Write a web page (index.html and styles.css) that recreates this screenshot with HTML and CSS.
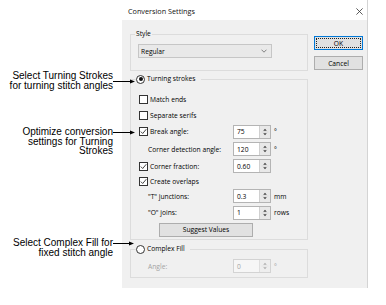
FILE: index.html
```html
<!DOCTYPE html>
<html lang="en">
<head>
<meta charset="utf-8">
<title>Conversion Settings</title>
<link rel="stylesheet" href="styles.css">
</head>
<body>
<div class="page">
  <div class="notes">
    <div class="note note-1">Select Turning Strokes<br>for turning stitch angles<svg class="arrow arrow-1" width="22" height="5" viewBox="0 0 22 5"><path d="M0 2.5H18" stroke="#000" stroke-width="1"/><path d="M17 0.5L22 2.5L17 4.5Z" fill="#000"/></svg></div>
    <div class="note note-2">Optimize conversion<br>settings for Turning<br>Strokes<svg class="arrow arrow-2" width="22" height="5" viewBox="0 0 22 5"><path d="M0 2.5H18" stroke="#000" stroke-width="1"/><path d="M17 0.5L22 2.5L17 4.5Z" fill="#000"/></svg></div>
    <div class="note note-3">Select Complex Fill for<br>fixed stitch angle<svg class="arrow arrow-3" width="21" height="5" viewBox="0 0 21 5"><path d="M0 2.5H17" stroke="#000" stroke-width="1"/><path d="M16 0.5L21 2.5L16 4.5Z" fill="#000"/></svg></div>
  </div>

  <div class="dialog">
    <div class="titlebar">
      <span class="title">Conversion Settings</span>
      <svg class="close" width="7" height="7" viewBox="0 0 7 7"><path d="M0.4 0.4L6.6 6.6M6.6 0.4L0.4 6.6" stroke="#333" stroke-width="0.8" fill="none"/></svg>
    </div>
    <div class="body">
      <div class="groups">
        <fieldset class="group group-style">
          <legend class="legend-text">Style</legend>
          <div class="combo">
            <span>Regular</span>
            <svg width="6" height="4" viewBox="0 0 6 4"><path d="M0.5 0.7L3 3.2L5.5 0.7" fill="none" stroke="#666" stroke-width="0.8"/></svg>
          </div>
        </fieldset>

        <fieldset class="group group-turning">
          <legend class="legend-radio"><span class="legend-inner"><span class="radio on"></span><span>Turning strokes</span></span></legend>
          <div class="opt-grid turning-grid">
            <div class="lbl span-all"><span class="check"></span>Match ends</div>
            <div class="lbl span-all"><span class="check"></span>Separate serifs</div>

            <div class="lbl"><span class="check"><svg width="7" height="7" viewBox="0 0 7 7"><path d="M0.8 3.6L2.7 5.5L6.3 1.2" fill="none" stroke="#333" stroke-width="0.9"/></svg></span>Break angle:</div>
            <div class="spin"><span class="spin-val">75</span><span class="spin-btns"><svg width="10" height="12" viewBox="0 0 10 12"><path d="M3.2 4.8L5 2.8L6.8 4.8Z M3.2 7.2L5 9.2L6.8 7.2Z" fill="#444"/><path d="M1.5 6H8.5" stroke="#c8c8c8" stroke-width="0.5"/></svg></span></div>
            <div class="unit">°</div>

            <div class="lbl indent">Corner detection angle:</div>
            <div class="spin"><span class="spin-val">120</span><span class="spin-btns"><svg width="10" height="12" viewBox="0 0 10 12"><path d="M3.2 4.8L5 2.8L6.8 4.8Z M3.2 7.2L5 9.2L6.8 7.2Z" fill="#444"/><path d="M1.5 6H8.5" stroke="#c8c8c8" stroke-width="0.5"/></svg></span></div>
            <div class="unit">°</div>

            <div class="lbl"><span class="check"><svg width="7" height="7" viewBox="0 0 7 7"><path d="M0.8 3.6L2.7 5.5L6.3 1.2" fill="none" stroke="#333" stroke-width="0.9"/></svg></span>Corner fraction:</div>
            <div class="spin"><span class="spin-val">0.60</span><span class="spin-btns"><svg width="10" height="12" viewBox="0 0 10 12"><path d="M3.2 4.8L5 2.8L6.8 4.8Z M3.2 7.2L5 9.2L6.8 7.2Z" fill="#444"/><path d="M1.5 6H8.5" stroke="#c8c8c8" stroke-width="0.5"/></svg></span></div>
            <div class="unit"></div>

            <div class="lbl span-all"><span class="check"><svg width="7" height="7" viewBox="0 0 7 7"><path d="M0.8 3.6L2.7 5.5L6.3 1.2" fill="none" stroke="#333" stroke-width="0.9"/></svg></span>Create overlaps</div>

            <div class="lbl indent">&quot;T&quot; junctions:</div>
            <div class="spin"><span class="spin-val">0.3</span><span class="spin-btns"><svg width="10" height="12" viewBox="0 0 10 12"><path d="M3.2 4.8L5 2.8L6.8 4.8Z M3.2 7.2L5 9.2L6.8 7.2Z" fill="#444"/><path d="M1.5 6H8.5" stroke="#c8c8c8" stroke-width="0.5"/></svg></span></div>
            <div class="unit">mm</div>

            <div class="lbl indent">&quot;O&quot; joins:</div>
            <div class="spin"><span class="spin-val">1</span><span class="spin-btns"><svg width="10" height="12" viewBox="0 0 10 12"><path d="M3.2 4.8L5 2.8L6.8 4.8Z M3.2 7.2L5 9.2L6.8 7.2Z" fill="#444"/><path d="M1.5 6H8.5" stroke="#c8c8c8" stroke-width="0.5"/></svg></span></div>
            <div class="unit">rows</div>

            <div class="span-all"><div class="btn btn-suggest">Suggest Values</div></div>
          </div>
        </fieldset>

        <fieldset class="group group-complex">
          <legend class="legend-radio"><span class="legend-inner"><span class="radio"></span><span>Complex Fill</span></span></legend>
          <div class="opt-grid complex-grid">
            <div class="lbl indent disabled">Angle:</div>
            <div class="spin spin-disabled"><span class="spin-val">0</span><span class="spin-btns"><svg width="10" height="12" viewBox="0 0 10 12"><path d="M3.2 4.8L5 2.8L6.8 4.8Z M3.2 7.2L5 9.2L6.8 7.2Z" fill="#b0b0b0"/><path d="M1.5 6H8.5" stroke="#d8d8d8" stroke-width="0.5"/></svg></span></div>
            <div class="unit disabled">°</div>
          </div>
        </fieldset>
      </div>

      <div class="buttons">
        <div class="btn btn-default">OK</div>
        <div class="btn">Cancel</div>
      </div>
    </div>
  </div>
</div>
</body>
</html>
```

FILE: styles.css
```css
html, body {
  margin: 0;
  padding: 0;
  background: #ffffff;
}

body {
  width: 386px;
  height: 305px;
  overflow: hidden;
}

.page {
  display: flex;
  align-items: flex-start;
}

/* ---------- annotations ---------- */
.notes {
  width: 122px;
  flex: none;
  display: flex;
  flex-direction: column;
  align-items: flex-start;
  font-family: "Liberation Sans", Arial, sans-serif;
  font-size: 10px;
  line-height: 9.5px;
  color: #000;
}

.note {
  position: relative;
  width: 113px;
  text-align: right;
  white-space: nowrap;
}

.note-1 { margin-top: 71px; }
.note-2 { margin-top: 37px; }
.note-3 { margin-top: 82.5px; }

.arrow {
  position: absolute;
  left: 100%;
}

.arrow-1 { top: 8px; }
.arrow-2 { top: 3px; }
.arrow-3 { top: 3px; }

/* ---------- dialog ---------- */
.dialog {
  width: 246px;
  height: 288px;
  flex: none;
  box-sizing: border-box;
  border-right: 1px solid #d4d4d4;
  display: flex;
  flex-direction: column;
  font-family: "Open Sans", "Noto Sans", sans-serif;
  font-size: 6.7px;
  color: #000;
}

.titlebar {
  height: 20px;
  flex: none;
  box-sizing: border-box;
  padding: 2px 4px 0 6px;
  display: flex;
  align-items: center;
  justify-content: space-between;
  background: #ffffff;
}

.title {
  font-size: 7.25px;
  color: #111;
}

.close {
  display: block;
}

.body {
  flex: 1;
  display: flex;
  gap: 6px;
  padding: 9px 4px 0 8px;
  background: #f0f0f0;
}

.groups {
  width: 178px;
  flex: none;
  display: flex;
  flex-direction: column;
}

.group {
  margin: 0;
  padding: 0;
  min-width: 0;
  border: 1px solid #dcdcdc;
}

.group-turning { margin-top: 3px; }
.group-complex { margin-top: 4px; }

legend {
  padding: 0;
  height: 10px;
  line-height: 10px;
}

.legend-text {
  margin-left: 4px;
  padding: 0 1px;
}

.legend-radio {
  margin-left: 5px;
  padding-right: 5px;
}

.legend-inner {
  display: flex;
  align-items: center;
  gap: 2px;
  height: 10px;
}

.combo {
  margin: 5px 0 12px 7px;
  width: 134px;
  height: 14px;
  box-sizing: border-box;
  border: 1px solid #c6c6c6;
  background: #e9e9e9;
  display: flex;
  align-items: center;
  justify-content: space-between;
  padding: 0 4px 0 2px;
}

.combo svg { display: block; }

/* ---------- option grid ---------- */
.opt-grid {
  display: grid;
  grid-template-columns: 94px 38px auto;
  align-items: center;
}

.turning-grid {
  grid-template-rows: 16px 16px 17px 18px 16px 14px 16px 17px 17px;
  padding: 7px 0 1px 8px;
}

.complex-grid {
  grid-template-rows: 14px;
  padding: 5px 0 4px 8px;
}

.span-all { grid-column: 1 / -1; }

.lbl {
  display: flex;
  align-items: center;
  gap: 2px;
  white-space: nowrap;
}

.indent { padding-left: 9px; }

.disabled { color: #a3a3a3; }

.check {
  width: 9px;
  height: 9px;
  flex: none;
  box-sizing: border-box;
  border: 1px solid #333;
  background: #fff;
  display: flex;
  align-items: center;
  justify-content: center;
}

.check svg { display: block; }

.radio {
  width: 9px;
  height: 9px;
  flex: none;
  box-sizing: border-box;
  border: 1px solid #333;
  border-radius: 50%;
  background: #fff;
  display: flex;
  align-items: center;
  justify-content: center;
}

.radio.on::after {
  content: "";
  width: 4px;
  height: 4px;
  border-radius: 50%;
  background: #111;
}

.spin {
  width: 38px;
  height: 14px;
  box-sizing: border-box;
  border: 1px solid #b4b4b4;
  background: #fff;
  display: flex;
}

.spin-val {
  flex: 1;
  padding-left: 3px;
  display: flex;
  align-items: center;
}

.spin-btns {
  width: 11px;
  flex: none;
  box-sizing: border-box;
  border-left: 1px solid #d0d0d0;
  background: #e8e8e8;
  display: flex;
  align-items: center;
  justify-content: center;
}

.spin-btns svg { display: block; }

.spin-disabled {
  border-color: #d3d3d3;
  background: #f6f6f6;
  color: #a3a3a3;
}

.spin-disabled .spin-btns {
  background: #eeeeee;
  border-left-color: #dedede;
}

.unit {
  padding-left: 3px;
  white-space: nowrap;
}

/* ---------- buttons ---------- */
.buttons {
  width: 49px;
  flex: none;
  display: flex;
  flex-direction: column;
  gap: 6px;
  padding-top: 7px;
}

.btn {
  height: 14px;
  box-sizing: border-box;
  border: 1px solid #adadad;
  background: #e1e1e1;
  display: flex;
  align-items: center;
  justify-content: center;
  white-space: nowrap;
}

.btn-default {
  border-color: #0078d7;
  outline: 1px dotted #222;
  outline-offset: -3px;
}

.btn-suggest {
  width: 94px;
  margin-left: 20px;
}
```
